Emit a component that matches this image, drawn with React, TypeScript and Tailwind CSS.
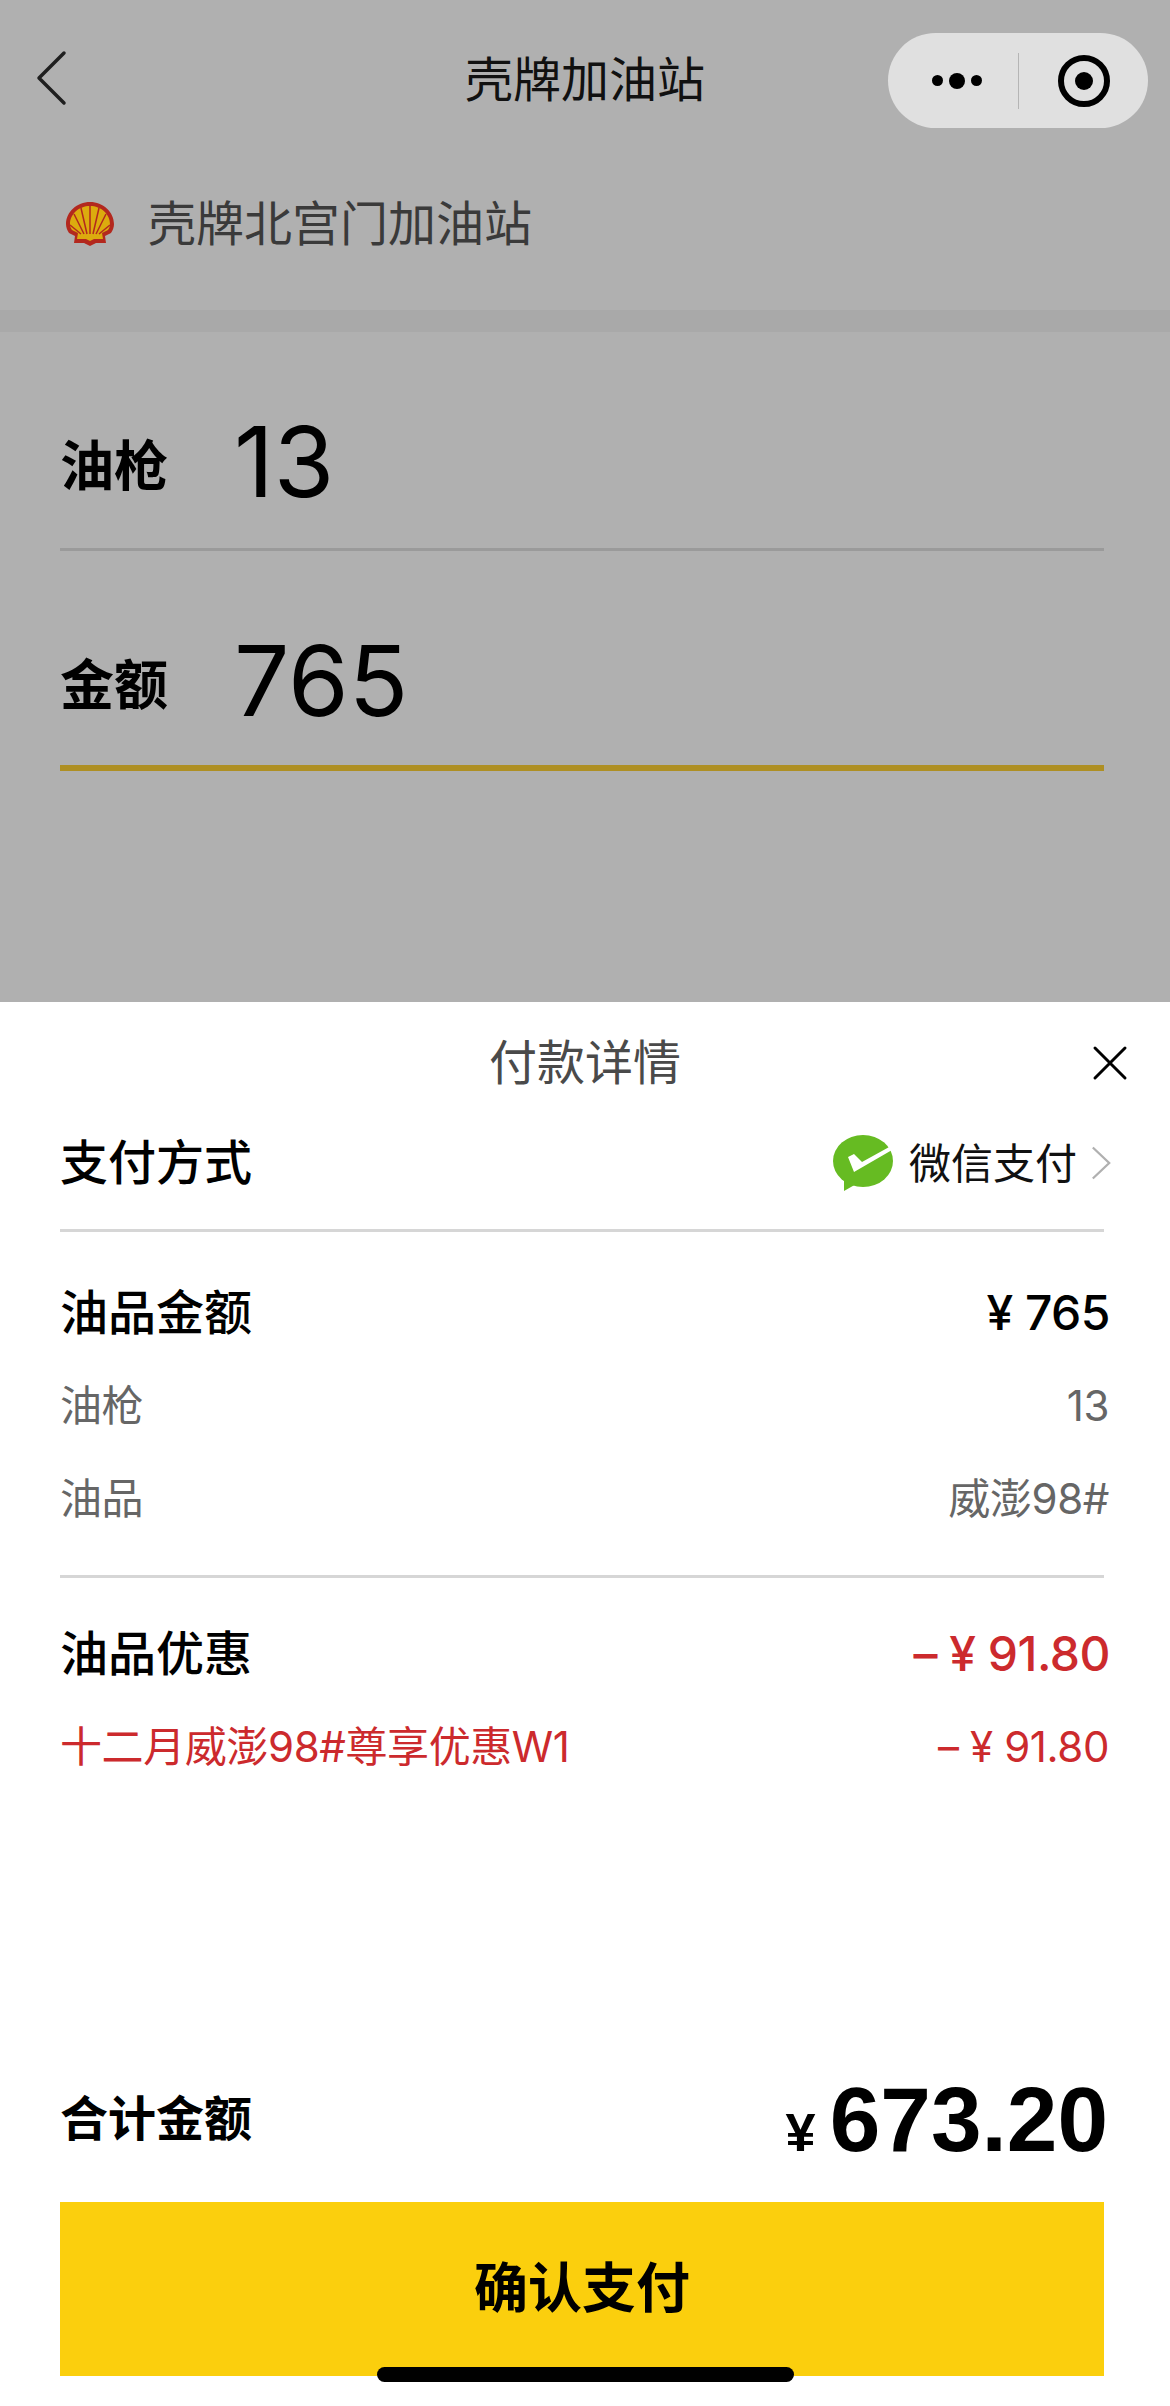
const font = { fontFamily: 'Inter,"Noto Sans CJK SC",sans-serif' };
const heavyDigits = { fontFamily: '"Liberation Sans","Noto Sans CJK SC",sans-serif' };

function Shell() {
  return (
    <svg viewBox="0 0 48 44" className="w-[48px] h-[44px]">
      <path d="M24 0C11 0 0 10 0 22c0 3 1 6 3 9l6 3-1 7h10l6 3 6-3h10l-1-7 6-3c2-3 3-6 3-9C48 10 37 0 24 0z" fill="#b3281e" />
      <path d="M24 4C13 4 4 12 4 22c0 2 .5 4 2 6l6 3-1 6h9l4 2 4-2h9l-1-6 6-3c1.500-2 2-4 2-6C44 12 35 4 24 4z" fill="#dcab0e" />
      <g stroke="#b3281e" strokeWidth="1.500" fill="none">
        <path d="M24 32V4M21 32L15 6M27 32L33 6M18 32L8 12M30 32L40 12M15 32L4 23M33 32L44 23" />
      </g>
    </svg>
  );
}

function WeChatPay() {
  return (
    <svg viewBox="0 0 60 56" className="w-[60px] h-[56px]">
      <ellipse cx="30" cy="26" rx="30" ry="26" fill="#66bb22" />
      <path d="M11 44l0 12 14-8z" fill="#66bb22" />
      <path d="M15 22l6-3 8 8L58 11l1 4-38 22z" fill="#ffffff" />
    </svg>
  );
}

function FieldRow({ label, value, line }: { label: string; value: string; line: string }) {
  return (
    <div className={`ml-[60px] mr-[66px] pt-[81px] flex items-start ${line}`}>
      <span className="w-[174px] pt-[27px] text-[54px] font-bold text-black leading-none">{label}</span>
      <span className="text-[98px] text-black leading-none">{value}</span>
    </div>
  );
}

function DetailRow({ label, value, tone }: { label: string; value: string; tone: string }) {
  return (
    <div className={`pl-[60px] pr-[61px] h-[93px] flex items-center justify-between text-[42px] tracking-[-0.4px] ${tone}`}>
      <span>{label}</span>
      <span>{value}</span>
    </div>
  );
}

function HeadRow({ label, value, tone }: { label: string; value: string; tone: string }) {
  return (
    <div className="pl-[60px] pr-[60px] h-[92px] flex items-center justify-between text-[48px] font-medium text-black">
      <span>{label}</span>
      <span className={`tracking-[-0.5px] ${tone}`}>{value}</span>
    </div>
  );
}

export default function App() {
  return (
    <div className="relative w-[1170px] h-[2406px] flex flex-col bg-white overflow-hidden" style={font}>
      <div className="h-[1002px] bg-[#b0b0b0] flex flex-col">
        <div className="relative h-[160px] flex items-center justify-center">
          <svg viewBox="0 0 32 56" className="absolute left-[35px] top-[50px] w-[32px] h-[56px]">
            <path d="M29 3L4 28l25 25" fill="none" stroke="#1f1f1f" strokeWidth="3.500" strokeLinecap="round" strokeLinejoin="round" />
          </svg>
          <span className="text-[48px] text-[#111111] leading-none">壳牌加油站</span>
          <div className="absolute left-[888px] top-[33px] w-[260px] h-[95px] rounded-full bg-[#e0e0e0] flex items-center">
            <div className="w-[130px] pl-[8px] flex items-center justify-center gap-[6px]">
              <span className="w-[11px] h-[11px] rounded-full bg-black" />
              <span className="w-[16px] h-[16px] rounded-full bg-black" />
              <span className="w-[11px] h-[11px] rounded-full bg-black" />
            </div>
            <div className="w-[1px] h-[56px] bg-[#b5b5b5]" />
            <div className="flex-1 flex justify-center">
              <div className="w-[52px] h-[52px] rounded-full border-[6px] border-black flex items-center justify-center">
                <span className="w-[18px] h-[18px] rounded-full bg-black" />
              </div>
            </div>
          </div>
        </div>
        <div className="h-[150px] pl-[66px] pb-[22px] flex items-center gap-[34px]">
          <Shell />
          <span className="text-[48px] text-[#3a3a3a] leading-none">壳牌北宫门加油站</span>
        </div>
        <div className="h-[22px] bg-[#a9a9a9]" />
        <FieldRow label="油枪" value="13" line="h-[219px] border-b-[3px] border-[#9a9a9a]" />
        <FieldRow label="金额" value="765" line="h-[220px] border-b-[6px] border-[#ae8f23]" />
      </div>

      <div className="flex-1 flex flex-col">
        <div className="relative h-[116px] pt-[6px] flex items-center justify-center">
          <span className="text-[48px] text-[#4a4a4a] leading-none">付款详情</span>
          <svg viewBox="0 0 36 36" className="absolute left-[1092px] top-[43px] w-[36px] h-[36px]">
            <path d="M3 3l30 30M33 3L3 33" stroke="#000" strokeWidth="3" strokeLinecap="round" />
          </svg>
        </div>
        <div className="ml-[60px] mr-[66px] h-[114px] pb-[21px] flex items-center justify-between border-b-[3px] border-[#d6d6d6]">
          <span className="text-[48px] font-medium text-black">支付方式</span>
          <div className="flex items-center relative right-[-7px]">
            <WeChatPay />
            <span className="ml-[16px] text-[42px] text-[#111111]">微信支付</span>
            <svg viewBox="0 0 22 38" className="ml-[14px] w-[20px] h-[36px]">
              <path d="M2 2l18 17L2 36" fill="none" stroke="#b0b0b0" strokeWidth="2.500" />
            </svg>
          </div>
        </div>
        <div className="pt-[35px]">
          <HeadRow label="油品金额" value="¥ 765" tone="text-black" />
          <DetailRow label="油枪" value="13" tone="text-[#666666]" />
          <DetailRow label="油品" value="威澎98#" tone="text-[#666666]" />
        </div>
        <div className="ml-[60px] mr-[66px] mt-[30px] border-b-[3px] border-[#d6d6d6]" />
        <div className="pt-[30px]">
          <HeadRow label="油品优惠" value="– ¥ 91.80" tone="text-[#cc2a2d]" />
          <DetailRow label="十二月威澎98#尊享优惠W1" value="– ¥ 91.80" tone="text-[#cc2a2d]" />
        </div>
        <div className="flex-1" />
        <div className="pl-[60px] pr-[62px] h-[110px] mb-[28px] flex items-center justify-between">
          <span className="text-[48px] font-bold text-black">合计金额</span>
          <span className="flex items-baseline font-bold text-black leading-none" style={heavyDigits}>
            <span className="text-[54px] mr-[14px]">¥</span>
            <span className="text-[91px]">673.20</span>
          </span>
        </div>
        <div className="ml-[60px] mr-[66px] h-[174px] mb-[30px] bg-[#fbcf0d] flex items-center justify-center">
          <span className="text-[54px] font-bold text-black leading-none">确认支付</span>
        </div>
      </div>

      <div className="absolute left-[377px] top-[2367px] w-[417px] h-[15px] rounded-full bg-black" />
    </div>
  );
}
